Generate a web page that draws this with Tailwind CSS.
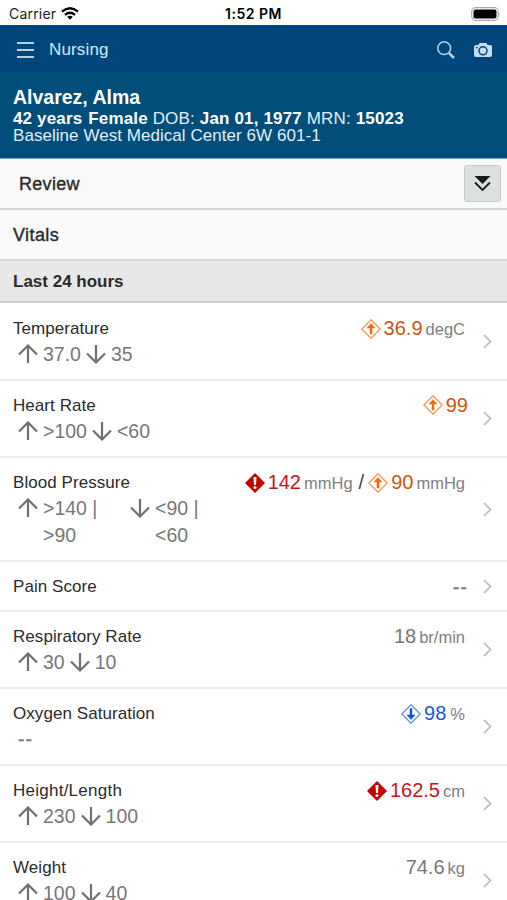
<!DOCTYPE html>
<html lang="en">
<head>
<meta charset="utf-8">
<title>Nursing</title>
<script src="https://cdn.jsdelivr.net/npm/@tailwindcss/browser@4"></script>
</head>
<body class="h-[900px] w-[507px] overflow-hidden bg-white font-['Liberation_Sans',sans-serif] text-[#2b2b2b]">
<svg class="hidden">
  <symbol id="up" viewBox="0 0 20 20"><path d="M10 19V2M1 10.5 10 1.5l9 9" fill="none" stroke="#707070" stroke-width="2.2"/></symbol>
  <symbol id="down" viewBox="0 0 20 20"><path d="M10 1v17M1 9.5l9 9 9-9" fill="none" stroke="#707070" stroke-width="2.2"/></symbol>
  <symbol id="high" viewBox="0 0 20 20"><path d="M10 .8 19.2 10 10 19.2 .8 10Z" fill="none" stroke="#fb9352" stroke-width="1.3"/><path d="M9 15V9H6l4-4.5L14 9h-3v6Z" fill="#f26b0a" stroke="#f26b0a" stroke-width=".5"/></symbol>
  <symbol id="low" viewBox="0 0 20 20"><path d="M10 .8 19.2 10 10 19.2 .8 10Z" fill="none" stroke="#5b8fe8" stroke-width="1.3"/><path d="M9 4.5v6.5H6l4 4.5 4-4.5h-3V4.5Z" fill="#0b55dc" stroke="#0b55dc" stroke-width=".5"/></symbol>
  <symbol id="crit" viewBox="0 0 20 20"><path d="M10 0 20 10 10 20 0 10Z" fill="#c80000"/><path d="M8.5 4h3L11 12H9Z" fill="#fff"/><circle cx="10" cy="14.5" r="1.5" fill="#fff"/></symbol>
  <symbol id="chev" viewBox="0 0 9 15"><path d="M1 1l6.5 6.5L1 14" fill="none" stroke="#b8b8b8" stroke-width="1.6"/></symbol>
</svg>

<div class="grid h-[25px] grid-cols-3 items-center pt-[2px] font-['Inter',sans-serif] text-black">
  <div class="flex items-center gap-[5px] pl-[9px] text-[14px] tracking-[0.2px] text-[#222]">Carrier
    <svg class="h-[13px] w-[18px]" viewBox="0 0 18 13" fill="none" stroke="#000" stroke-width="2.3"><path d="M1 4.6Q9-2 17 4.6M4 7.8q5-4.1 10 0"/><path d="M6.2 9.8Q9 7.6 11.8 9.8L9 12.8Z" fill="#000" stroke="none"/></svg>
  </div>
  <div class="text-center text-[14px] font-semibold tracking-[0.5px]">1:52 PM</div>
  <div class="flex justify-end pr-[6px]"><svg class="h-[14px] w-[30px]" viewBox="0 0 30 14"><rect x=".7" y=".7" width="26.6" height="12.6" rx="4" fill="#fff" stroke="#aaa" stroke-width="1.2"/><rect x="2.5" y="2.5" width="23" height="9" rx="2" fill="#000"/><path d="M28.5 5q1.5 2 0 4Z" fill="#aaa"/></svg></div>
</div>

<div class="flex h-[48px] items-center bg-[#00467a] pt-[2px] pr-[15px] pl-[17px] text-[#d9e8f3]">
  <svg class="h-[16px] w-[17px]" viewBox="0 0 17 16" stroke="#b9d1e5" stroke-width="2"><path d="M0 1h17M0 8h17M0 15h17"/></svg>
  <span class="ml-[15px] grow text-[17px] tracking-[0.15px]">Nursing</span>
  <svg class="h-[18px] w-[18px]" viewBox="0 0 18 18" fill="none" stroke="#b9d1e5"><circle cx="7.2" cy="7.2" r="6.4" stroke-width="1.5"/><path d="m11.8 11.8 5.2 5.2" stroke-width="2.6"/></svg>
  <svg class="ml-[19px] h-[14px] w-[18px]" viewBox="0 0 18 14"><path d="M2 2h2.5l1-2h7l1 2H16q2 0 2 2v8q0 2-2 2H2q-2 0-2-2V4q0-2 2-2Z" fill="#c9dcec"/><circle cx="9" cy="7.8" r="4" fill="none" stroke="#00467a" stroke-width="1.5"/><circle cx="2.8" cy="4.6" r=".9" fill="#00467a"/></svg>
</div>

<div class="h-[86px] border-b border-[#7fa9c2] bg-[#004e79] pt-[13px] pl-[13px] whitespace-nowrap text-[#e4eef5]">
  <div class="text-[19.5px] leading-[23px] font-bold text-white">Alvarez, Alma</div>
  <div class="pt-px text-[17px] leading-[17px] tracking-[0.16px] [&>b]:text-white"><b>42 years</b> <b class="ml-px">Female</b> DOB: <b>Jan 01, 1977</b> MRN: <b>15023</b></div>
  <div class="text-[17px] leading-[18px] tracking-[0.05px]">Baseline West Medical Center 6W 601-1</div>
</div>

<div class="flex h-[51px] items-center justify-between border-b-2 border-[#d4d6d6] bg-[#f9f9f9] pr-[6px] pl-[19px]">
  <span class="pt-[2px] text-[18px] tracking-[0.3px] [-webkit-text-stroke:0.4px_#2b2b2b]">Review</span>
  <div class="flex h-[37px] w-[37px] items-center justify-center rounded-[3px] border border-[#c6caca] bg-[#dce0e1]">
    <svg class="h-[16px] w-[17px]" viewBox="0 0 17 16"><path d="M.5 0h16l-8 8Z" fill="#1a1a1a"/><path d="m1 6.5 7.5 7.5L16 6.5" fill="none" stroke="#1a1a1a" stroke-width="1.8"/></svg>
  </div>
</div>
<div class="flex h-[49px] items-center bg-[#f9f9f9] pt-[2px] pl-[13px] text-[18px] tracking-[0.4px] [-webkit-text-stroke:0.4px_#2b2b2b]">Vitals</div>
<div class="flex h-[44px] items-center border-t-2 border-b-2 border-t-[#d6d8d8] border-b-[#cfd1d1] bg-[#e8e8e8] pt-[2px] pl-[13px] text-[17px] font-bold">Last 24 hours</div>

<main class="pt-px [&>section]:flex [&>section]:h-[77px] [&>section]:justify-between [&>section]:border-b-2 [&>section]:border-[#ececec] [&>section]:pr-[15px] [&>section]:pl-[13px] [&_h3]:text-[17px] [&_h3]:leading-[20px] [&_h3]:tracking-[0.06px]">
  <section>
    <div class="pt-[15px]"><h3>Temperature</h3>
      <div class="ml-[5px] flex items-center pt-[2px] text-[19.5px] leading-[26px] text-[#777]"><svg class="mr-[5px] h-5 w-5"><use href="#up"/></svg>37.0<svg class="mr-[5px] ml-[5px] h-5 w-5"><use href="#down"/></svg>35</div></div>
    <div class="flex items-center"><div class="mr-[18px] flex items-baseline self-start pt-[12px] text-[20px] leading-[24px] text-[#cc560c]"><svg class="mr-[3px] h-5 w-5 self-center"><use href="#high"/></svg>36.9<span class="ml-[3px] text-[16.5px] text-[#808080]">degC</span></div><svg class="h-[15px] w-[9px]"><use href="#chev"/></svg></div>
  </section>
  <section>
    <div class="pt-[15px]"><h3>Heart Rate</h3>
      <div class="ml-[5px] flex items-center pt-[2px] text-[19.5px] leading-[26px] text-[#777]"><svg class="mr-[5px] h-5 w-5"><use href="#up"/></svg>&gt;100<svg class="mr-[5px] ml-[5px] h-5 w-5"><use href="#down"/></svg>&lt;60</div></div>
    <div class="flex items-center"><div class="mr-[15px] flex items-baseline self-start pt-[12px] text-[20px] leading-[24px] text-[#cc560c]"><svg class="mr-[3px] h-5 w-5 self-center"><use href="#high"/></svg>99</div><svg class="h-[15px] w-[9px]"><use href="#chev"/></svg></div>
  </section>
  <section class="!h-[104px]">
    <div class="pt-[15px]"><h3>Blood Pressure</h3>
      <div class="ml-[5px] flex pt-[2px] text-[19.5px] leading-[27px] text-[#777]"><svg class="mt-[3px] mr-[5px] h-5 w-5"><use href="#up"/></svg><div class="w-[87px]">&gt;140 |<br>&gt;90</div><svg class="mt-[3px] mr-[5px] h-5 w-5"><use href="#down"/></svg><div>&lt;90 |<br>&lt;60</div></div></div>
    <div class="flex items-center"><div class="mr-[18px] flex items-baseline self-start pt-[12px] text-[20px] leading-[24px] text-[#cc560c]"><svg class="mr-[3px] h-5 w-5 self-center"><use href="#crit"/></svg><span class="text-[#c4151c]">142</span><span class="ml-[3px] text-[16.5px] text-[#808080]">mmHg</span><span class="mr-[4px] ml-[6px] text-[#444]">/</span><svg class="mr-[3px] h-5 w-5 self-center"><use href="#high"/></svg>90<span class="ml-[3px] text-[16.5px] text-[#808080]">mmHg</span></div><svg class="h-[15px] w-[9px]"><use href="#chev"/></svg></div>
  </section>
  <section class="!h-[50px]">
    <div class="pt-[15px]"><h3>Pain Score</h3></div>
    <div class="flex items-center"><div class="mr-[15px] pt-[2px] text-[20px] tracking-[1px] text-[#777] [-webkit-text-stroke:0.3px_#777]">--</div><svg class="h-[15px] w-[9px]"><use href="#chev"/></svg></div>
  </section>
  <section>
    <div class="pt-[15px]"><h3>Respiratory Rate</h3>
      <div class="ml-[5px] flex items-center pt-[2px] text-[19.5px] leading-[26px] text-[#777]"><svg class="mr-[5px] h-5 w-5"><use href="#up"/></svg>30<svg class="mr-[5px] ml-[5px] h-5 w-5"><use href="#down"/></svg>10</div></div>
    <div class="flex items-center"><div class="mr-[18px] flex items-baseline self-start pt-[12px] text-[20px] leading-[24px] text-[#777]">18<span class="ml-[3px] text-[16.5px] text-[#808080]">br/min</span></div><svg class="h-[15px] w-[9px]"><use href="#chev"/></svg></div>
  </section>
  <section>
    <div class="pt-[15px]"><h3>Oxygen Saturation</h3>
      <div class="ml-[5px] pt-[2px] text-[19.5px] leading-[26px] tracking-[1px] text-[#777] [-webkit-text-stroke:0.3px_#777]">--</div></div>
    <div class="flex items-center"><div class="mr-[18px] flex items-baseline self-start pt-[12px] text-[20px] leading-[24px] text-[#1a58d8]"><svg class="mr-[3px] h-5 w-5 self-center"><use href="#low"/></svg>98<span class="ml-[4px] text-[16.5px] text-[#808080]">%</span></div><svg class="h-[15px] w-[9px]"><use href="#chev"/></svg></div>
  </section>
  <section>
    <div class="pt-[15px]"><h3 class="!tracking-[0.25px]">Height/Length</h3>
      <div class="ml-[5px] flex items-center pt-[2px] text-[19.5px] leading-[26px] text-[#777]"><svg class="mr-[5px] h-5 w-5"><use href="#up"/></svg>230<svg class="mr-[5px] ml-[5px] h-5 w-5"><use href="#down"/></svg>100</div></div>
    <div class="flex items-center"><div class="mr-[18px] flex items-baseline self-start pt-[12px] text-[20px] leading-[24px] text-[#c4151c]"><svg class="mr-[3px] h-5 w-5 self-center"><use href="#crit"/></svg>162.5<span class="ml-[3px] text-[16.5px] text-[#808080]">cm</span></div><svg class="h-[15px] w-[9px]"><use href="#chev"/></svg></div>
  </section>
  <section>
    <div class="pt-[15px]"><h3>Weight</h3>
      <div class="ml-[5px] flex items-center pt-[2px] text-[19.5px] leading-[26px] text-[#777]"><svg class="mr-[5px] h-5 w-5"><use href="#up"/></svg>100<svg class="mr-[5px] ml-[5px] h-5 w-5"><use href="#down"/></svg>40</div></div>
    <div class="flex items-center"><div class="mr-[18px] flex items-baseline self-start pt-[12px] text-[20px] leading-[24px] text-[#777]">74.6<span class="ml-[3px] text-[16.5px] text-[#808080]">kg</span></div><svg class="h-[15px] w-[9px]"><use href="#chev"/></svg></div>
  </section>
</main>
</body>
</html>
